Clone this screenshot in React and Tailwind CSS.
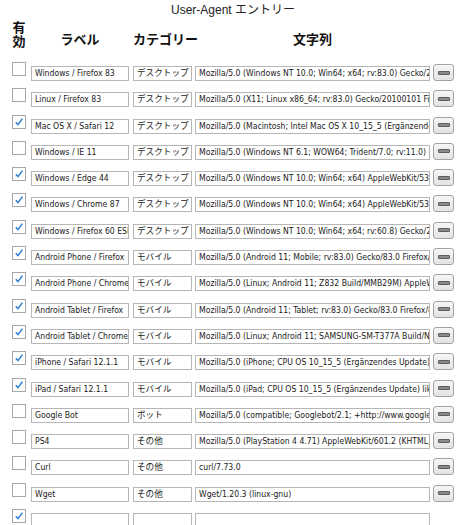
import React from "react";

const rows = [
  [false, "Windows / Firefox 83", "デスクトップ", "Mozilla/5.0 (Windows NT 10.0; Win64; x64; rv:83.0) Gecko/20100101 Firefox/83.0"],
  [false, "Linux / Firefox 83", "デスクトップ", "Mozilla/5.0 (X11; Linux x86_64; rv:83.0) Gecko/20100101 Firefox/83.0"],
  [true, "Mac OS X / Safari 12", "デスクトップ", "Mozilla/5.0 (Macintosh; Intel Mac OS X 10_15_5 (Ergänzendes Update)) AppleWebKit/605.1.15 (KHTML, like Gecko) Version/12.1.1 Safari/605.1.15"],
  [false, "Windows / IE 11", "デスクトップ", "Mozilla/5.0 (Windows NT 6.1; WOW64; Trident/7.0; rv:11.0) like Gecko"],
  [true, "Windows / Edge 44", "デスクトップ", "Mozilla/5.0 (Windows NT 10.0; Win64; x64) AppleWebKit/537.36 (KHTML, like Gecko) Chrome/70.0.3538.102 Safari/537.36 Edge/18.19582"],
  [true, "Windows / Chrome 87", "デスクトップ", "Mozilla/5.0 (Windows NT 10.0; Win64; x64) AppleWebKit/537.36 (KHTML, like Gecko) Chrome/87.0.4280.88 Safari/537.36"],
  [true, "Windows / Firefox 60 ESR", "デスクトップ", "Mozilla/5.0 (Windows NT 10.0; Win64; x64; rv:60.8) Gecko/20100101 Firefox/60.8"],
  [true, "Android Phone / Firefox", "モバイル", "Mozilla/5.0 (Android 11; Mobile; rv:83.0) Gecko/83.0 Firefox/83.0"],
  [true, "Android Phone / Chrome", "モバイル", "Mozilla/5.0 (Linux; Android 11; Z832 Build/MMB29M) AppleWebKit/537.36 (KHTML, like Gecko) Chrome/87.0.4280.66 Mobile Safari/537.36"],
  [true, "Android Tablet / Firefox", "モバイル", "Mozilla/5.0 (Android 11; Tablet; rv:83.0) Gecko/83.0 Firefox/83.0"],
  [true, "Android Tablet / Chrome", "モバイル", "Mozilla/5.0 (Linux; Android 11; SAMSUNG-SM-T377A Build/NMF26X) AppleWebKit/537.36 (KHTML, like Gecko) Chrome/87.0.4280.66 Safari/537.36"],
  [true, "iPhone / Safari 12.1.1", "モバイル", "Mozilla/5.0 (iPhone; CPU OS 10_15_5 (Ergänzendes Update) like Mac OS X) AppleWebKit/605.1.15 (KHTML, like Gecko) Version/12.1.1 Mobile/14E304 Safari/605.1.15"],
  [true, "iPad / Safari 12.1.1", "モバイル", "Mozilla/5.0 (iPad; CPU OS 10_15_5 (Ergänzendes Update) like Mac OS X) AppleWebKit/605.1.15 (KHTML, like Gecko) Version/12.1.1 Mobile/15E148 Safari/605.1.15"],
  [false, "Google Bot", "ボット", "Mozilla/5.0 (compatible; Googlebot/2.1; +http://www.google.com/bot.html)"],
  [false, "PS4", "その他", "Mozilla/5.0 (PlayStation 4 4.71) AppleWebKit/601.2 (KHTML, like Gecko)"],
  [false, "Curl", "その他", "curl/7.73.0"],
  [false, "Wget", "その他", "Wget/1.20.3 (linux-gnu)"],
];

const font = "font-['Liberation_Sans_Narrow','DejaVu_Sans_Condensed','Liberation_Sans','Noto_Sans_CJK_JP',sans-serif]";

function Check({ on }) {
  return (
    <div className="w-[14px] h-[14px] mt-[2px] shrink-0 border border-[#a8a8a8] bg-white flex items-center justify-center">
      {on && (
        <svg width="10" height="10" viewBox="0 0 10 10">
          <path d="M1.8 5.2 L4 7.6 L8.4 1.6" fill="none" stroke="#2a7fd4" strokeWidth="1.5" />
        </svg>
      )}
    </div>
  );
}

function Field({ w, value }) {
  return (
    <div
      className={`${w} h-[15px] mt-[6px] shrink-0 border border-[#b6b6b6] bg-white px-[3px] overflow-hidden whitespace-nowrap text-[8.6px] leading-[13px] text-[#1a1a1a] ${font}`}
    >
      {value}
    </div>
  );
}

function MinusButton() {
  return (
    <div className="w-[21px] h-[17px] mt-[4px] ml-[3px] shrink-0 border border-[#a3a3a3] rounded-[3px] bg-gradient-to-b from-[#f6f6f6] to-[#e3e3e3] flex items-center justify-center">
      <div className="w-[12px] h-[4px] bg-[#8a8a8a] border border-[#5c5c5c] rounded-[1px]" />
    </div>
  );
}

function Row({ on, label, cat, ua, button = true }) {
  return (
    <div className="flex h-[26.3px] pl-[12px] items-start">
      <Check on={on} />
      <div className="w-[5px] shrink-0" />
      <Field w="w-[98px]" value={label} />
      <div className="w-[4px] shrink-0" />
      <Field w="w-[59px]" value={cat} />
      <div className="w-[3px] shrink-0" />
      <Field w="w-[235px]" value={ua} />
      {button && <MinusButton />}
    </div>
  );
}

export default function App() {
  return (
    <div className="w-[466px] h-[525px] overflow-hidden bg-white text-black font-['Liberation_Sans','Noto_Sans_CJK_JP',sans-serif]">
      <div className="h-[20px] leading-[20px] text-[12px] text-center text-[#222]">User-Agent エントリー</div>
      <div className="flex h-[40px] pl-[12px] font-bold text-[13px] text-[#111]">
        <div className="w-[14px] shrink-0 flex flex-col items-center pt-[1px] leading-[14px]">
          <span>有</span>
          <span>効</span>
        </div>
        <div className="w-[5px] shrink-0" />
        <div className="w-[98px] shrink-0 text-center mt-[13px] leading-[14px]">ラベル</div>
        <div className="w-[4px] shrink-0" />
        <div className="w-[59px] shrink-0 text-center mt-[13px] leading-[14px] whitespace-nowrap">カテゴリー</div>
        <div className="w-[3px] shrink-0" />
        <div className="w-[235px] shrink-0 text-center mt-[13px] leading-[14px]">文字列</div>
      </div>
      {rows.map((r, i) => (
        <Row key={i} on={r[0]} label={r[1]} cat={r[2]} ua={r[3]} />
      ))}
      <Row on={true} label="" cat="" ua="" button={false} />
    </div>
  );
}
